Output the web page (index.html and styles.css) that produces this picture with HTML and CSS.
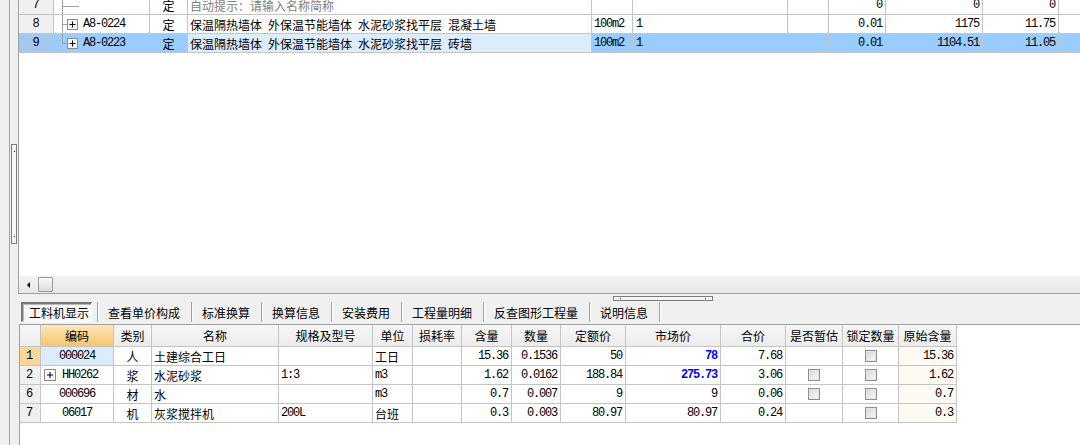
FILE: index.html
```html
<!DOCTYPE html>
<html lang="zh">
<head>
<meta charset="utf-8">
<title>工料机显示</title>
<link rel="stylesheet" href="styles.css">
</head>
<body>
<div class="edge"></div>
<div class="vsplit"><div class="vhandle"><i class="dot"></i><i class="dot"></i></div></div>
<div class="main">
  <div class="topframe">
    <div class="topgrid">
      <div class="rows">
        <div class="trow">
          <div class="c rn">7</div>
          <div class="c tree"><svg class="tl" width="29" height="18" viewBox="0 0 29 18"><path d="M8.5 0V18M8.5 10.5H25" stroke="#a0a0a0" fill="none"/></svg></div>
          <div class="c ctr">定</div>
          <div class="c l hint">自动提示：请输入名称简称</div>
          <div class="c"></div>
          <div class="c"></div>
          <div class="c"></div>
          <div class="c r m">0</div>
          <div class="c r m">0</div>
          <div class="c r m">0</div>
          <div class="c last"></div>
        </div>
        <div class="trow">
          <div class="c rn">8</div>
          <div class="c tree"><svg class="tl" width="29" height="18" viewBox="0 0 29 18"><path d="M8.5 0V18M8.5 9.5H13" stroke="#a0a0a0" fill="none"/><rect x="13.5" y="4.5" width="10" height="10" fill="#f4f4f4" stroke="#8c8c8c"/><path d="M15.5 9.5H21.5M18.5 6.5V12.5" stroke="#000" fill="none"/></svg><span class="m">A8-0224</span></div>
          <div class="c ctr">定</div>
          <div class="c l">保温隔热墙体&ensp;外保温节能墙体&ensp;水泥砂浆找平层&ensp;混凝土墙</div>
          <div class="c l m">100m2</div>
          <div class="c l q m">1</div>
          <div class="c"></div>
          <div class="c r m">0.01</div>
          <div class="c r m">1175</div>
          <div class="c r m">11.75</div>
          <div class="c last"></div>
        </div>
        <div class="trow sel">
          <div class="c rn">9</div>
          <div class="c tree"><svg class="tl" width="29" height="18" viewBox="0 0 29 18"><path d="M8.5 0V9.5H13" stroke="#a0a0a0" fill="none"/><rect x="13.5" y="4.5" width="10" height="10" fill="#f4f4f4" stroke="#8c8c8c"/><path d="M15.5 9.5H21.5M18.5 6.5V12.5" stroke="#000" fill="none"/></svg><span class="m">A8-0223</span></div>
          <div class="c ctr">定</div>
          <div class="c l nm">保温隔热墙体&ensp;外保温节能墙体&ensp;水泥砂浆找平层&ensp;砖墙</div>
          <div class="c l m">100m2</div>
          <div class="c l q m">1</div>
          <div class="c"></div>
          <div class="c r m">0.01</div>
          <div class="c r m">1104.51</div>
          <div class="c r m">11.05</div>
          <div class="c last"></div>
        </div>
      </div>
    </div>
    <div class="hscroll">
      <span class="arrow"></span>
      <span class="thumb"></span>
    </div>
  </div>
  <div class="spacer"><div class="hhandle"><i class="dot"></i><i class="dot"></i></div></div>
  <div class="tabbar">
    <div class="tab first">工料机显示</div>
    <div class="tab">查看单价构成</div>
    <div class="tab">标准换算</div>
    <div class="tab">换算信息</div>
    <div class="tab">安装费用</div>
    <div class="tab">工程量明细</div>
    <div class="tab">反查图形工程量</div>
    <div class="tab">说明信息</div>
    <div class="tab endsep"></div>
  </div>
  <div class="bottom">
    <div class="brow head">
      <div class="h"></div>
      <div class="h hot">编码</div>
      <div class="h">类别</div>
      <div class="h">名称</div>
      <div class="h">规格及型号</div>
      <div class="h">单位</div>
      <div class="h">损耗率</div>
      <div class="h">含量</div>
      <div class="h">数量</div>
      <div class="h">定额价</div>
      <div class="h">市场价</div>
      <div class="h">合价</div>
      <div class="h">是否暂估</div>
      <div class="h">锁定数量</div>
      <div class="h">原始含量</div>
    </div>
    <div class="brow">
      <div class="b ri hot">1</div>
      <div class="b ctr m cur">000024</div>
      <div class="b ctr">人</div>
      <div class="b l">土建综合工日</div>
      <div class="b l"></div>
      <div class="b l">工日</div>
      <div class="b"></div>
      <div class="b r m">15.36</div>
      <div class="b r m">0.1536</div>
      <div class="b r m">50</div>
      <div class="b r m blue">78</div>
      <div class="b r m">7.68</div>
      <div class="b ctr"></div>
      <div class="b ctr"><span class="chk"></span></div>
      <div class="b r m orig">15.36</div>
    </div>
    <div class="brow">
      <div class="b ri">2</div>
      <div class="b code2"><svg class="pb" width="12" height="12" viewBox="0 0 12 12"><rect x="0.5" y="0.5" width="11" height="11" fill="#f4f4f4" stroke="#8c8c8c"/><path d="M3 6H9M6 3V9" stroke="#000" fill="none"/></svg><span class="m">HH0262</span></div>
      <div class="b ctr">浆</div>
      <div class="b l">水泥砂浆</div>
      <div class="b l m">1:3</div>
      <div class="b l m">m3</div>
      <div class="b"></div>
      <div class="b r m">1.62</div>
      <div class="b r m">0.0162</div>
      <div class="b r m">188.84</div>
      <div class="b r m blue">275.73</div>
      <div class="b r m">3.06</div>
      <div class="b ctr"><span class="chk"></span></div>
      <div class="b ctr"><span class="chk"></span></div>
      <div class="b r m orig">1.62</div>
    </div>
    <div class="brow">
      <div class="b ri">6</div>
      <div class="b ctr m">000696</div>
      <div class="b ctr">材</div>
      <div class="b l">水</div>
      <div class="b l"></div>
      <div class="b l m">m3</div>
      <div class="b"></div>
      <div class="b r m">0.7</div>
      <div class="b r m">0.007</div>
      <div class="b r m">9</div>
      <div class="b r m">9</div>
      <div class="b r m">0.06</div>
      <div class="b ctr"><span class="chk"></span></div>
      <div class="b ctr"><span class="chk"></span></div>
      <div class="b r m orig">0.7</div>
    </div>
    <div class="brow">
      <div class="b ri">7</div>
      <div class="b ctr m">06017</div>
      <div class="b ctr">机</div>
      <div class="b l">灰浆搅拌机</div>
      <div class="b l m">200L</div>
      <div class="b l">台班</div>
      <div class="b"></div>
      <div class="b r m">0.3</div>
      <div class="b r m">0.003</div>
      <div class="b r m">80.97</div>
      <div class="b r m">80.97</div>
      <div class="b r m">0.24</div>
      <div class="b ctr"></div>
      <div class="b ctr"><span class="chk"></span></div>
      <div class="b r m orig">0.3</div>
    </div>
  </div>
</div>
</body>
</html>
```
FILE: styles.css
```css
* { box-sizing: border-box; margin: 0; padding: 0; }
html, body { width: 1080px; height: 445px; overflow: hidden; }
body {
  background: #f0f0f0;
  font-family: "Noto Sans CJK SC", "Liberation Sans", sans-serif;
  font-size: 12px;
  color: #000;
  display: flex;
}
.m {
  font-family: "Liberation Mono", "DejaVu Sans Mono", monospace;
  font-size: 12px;
  letter-spacing: -1.2px;
}
.edge { width: 10px; flex: none; border-right: 1px solid #a0a0a0; }
.vsplit { width: 8px; flex: none; padding: 144px 0 0 1px; }
.vhandle {
  width: 6px; height: 100px;
  border: 1px solid #7c7c7c;
  background: #f6f6f6;
  display: flex; flex-direction: column; justify-content: space-between; align-items: center;
  padding: 6px 0;
}
.dot { display: block; width: 1px; height: 1px; background: #0000c0; }
.main { flex: 1; min-width: 0; display: flex; flex-direction: column; }

/* top grid frame */
.topframe {
  height: 294px; flex: none;
  border-left: 1px solid #a0a0a0;
  border-bottom: 1px solid #a0a0a0;
  background: #fff;
  display: flex; flex-direction: column;
}
.topgrid { flex: 1; overflow: hidden; }
.rows { margin-top: -4px; }
.trow {
  display: grid;
  grid-template-columns: 35px 96px 38px 404px 41px 155px 41px 57px 97px 76px 1fr;
  height: 19px;
}
.c {
  border-right: 1px solid #c4c4c4;
  border-bottom: 1px solid #c4c4c4;
  display: flex; align-items: center;
  white-space: nowrap; overflow: hidden;
}
.c.last { border-right: none; }
.rn { justify-content: center; background: #f0f0f0; font-family: "Liberation Mono", monospace; font-size: 12px; }
.ctr { justify-content: center; }
.l { padding-left: 2px; }
.q { padding-left: 3px; }
.r { justify-content: flex-end; padding-right: 3px; }
.hint { color: #808080; }
.tree .tl { flex: none; }
.sel .c { background: #99ccff; }
.sel .c.rn { background: #a5c8ee; }
.sel .c.nm { background: #ddedfd; }
.sel .c.last { background: #99ccff; }

.hscroll {
  height: 17px; flex: none;
  background: linear-gradient(#f2f2f2, #e8e8e8);
  display: flex; align-items: center;
  padding-left: 8px;
}
.arrow {
  width: 0; height: 0;
  border-top: 3px solid transparent;
  border-bottom: 3px solid transparent;
  border-right: 3px solid #000;
}
.thumb {
  margin-left: 8px;
  width: 15px; height: 15px;
  border: 1px solid #9a9a9a;
  border-radius: 1px;
  background: linear-gradient(#fafafa, #dcdcdc);
}

.spacer { height: 7px; flex: none; padding: 2px 0 0 595px; }
.hhandle {
  width: 100px; height: 5px;
  border: 1px solid #7c7c7c;
  background: #f6f6f6;
  display: flex; justify-content: space-between; align-items: center;
  padding: 0 6px;
}

/* tabs */
.tabbar { height: 22px; flex: none; display: flex; align-items: center; }
.tab {
  height: 20px;
  display: flex; align-items: center;
  padding: 0 11px 0 10px;
  border-left: 1px solid #a0a0a0;
  box-shadow: inset 1px 0 #ffffff;
  color: #000;
  white-space: nowrap;
}
.tab.first {
  margin-left: 3px; margin-right: 5px;
  width: 71px;
  padding: 0 0 0 6px;
  border-style: solid;
  border-width: 2px 1px 1px 2px;
  border-color: #7a7a7a #ffffff #ffffff #7a7a7a;
  box-shadow: inset 1px 1px #b8b8b8;
  background: #f8f8f8;
}
.tab.endsep { padding: 0; width: 2px; }

/* bottom grid */
.bottom {
  flex: 1;
  margin: 1px 0 0 1px;
  border-top: 1px solid #a0a0a0;
  border-left: 1px solid #a0a0a0;
  background: #fff;
}
.brow {
  display: grid;
  grid-template-columns: 21px 73px 38px 127px 94px 40px 49px 50px 49px 65px 95px 65px 57px 56px 58px;
  height: 19px;
}
.brow.head { height: 22px; }
.h, .b {
  border-right: 1px solid #c4c4c4;
  border-bottom: 1px solid #c4c4c4;
  display: flex; align-items: center;
  white-space: nowrap; overflow: hidden;
}
.h {
  justify-content: center;
  background: linear-gradient(#f6f6f6, #ececec);
}
.h.hot { background: linear-gradient(#fde7bb, #f5c56e); }
.ri { padding-left: 6px; background: #f0f0f0; font-family: "Liberation Mono", monospace; font-size: 12px; }
.ri.hot { background: #fcd898; }
.cur { background: #ddecfc; }
.blue { color: #0000ff; font-weight: bold; }
.orig { background: #fdf9f3; }
.code2 { padding-left: 3px; }
.code2 .pb { flex: none; margin-right: 6px; }
.chk {
  display: block;
  width: 12px; height: 12px;
  border: 1px solid #8e8e8e;
  background: linear-gradient(135deg, #d4d4d4, #fbfbfb);
  box-shadow: inset 0 0 0 1px #e6e6e6;
}
```
